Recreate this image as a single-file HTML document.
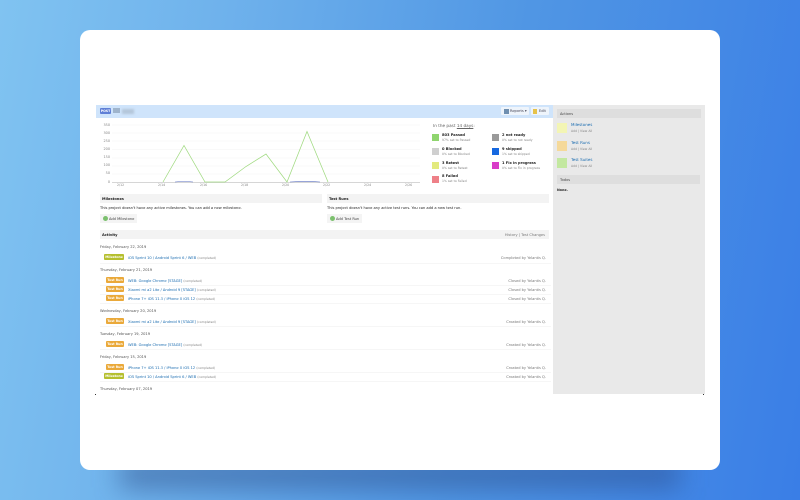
<!DOCTYPE html>
<html><head><meta charset="utf-8"><style>
html,body{margin:0;padding:0}
body{width:800px;height:500px;overflow:hidden;position:relative;background:linear-gradient(100deg,#80c3f1 0%,#6fb2ec 25%,#5096e4 60%,#3a7ee6 100%);font-family:"DejaVu Sans","Liberation Sans",sans-serif;text-rendering:geometricPrecision}
.shadow{position:absolute;left:120px;top:460px;width:560px;height:28px;background:rgba(40,70,130,.5);filter:blur(13px)}
.card{position:absolute;left:80px;top:30px;width:640px;height:440px;background:#fff;border-radius:10px}
.c{position:absolute;left:0;top:0;width:800px;height:500px;filter:blur(.35px)}
.c div{position:absolute;white-space:nowrap}
.t{font-size:3.6px;line-height:6px;height:6px;color:#444}
.b{font-weight:bold;color:#222}
.l{color:#1a6cb0}
.k{font-size:3.1px;color:#888}
.d{color:#555;left:100px}
.tag{left:106px;width:18px;height:6px;font-size:3.2px;line-height:6px;text-align:center;color:#fff;font-weight:bold;border-radius:1px;background:#eaa93a}
.tag.m{left:104px;width:20px;background:#b5bf2e}
.r{color:#777;text-align:right;right:254px}
.hd{background:#f3f3f3;height:9px}
.sw{width:7px;height:7px}
.y{font-size:3.4px;color:#888;text-align:right;width:14px;left:96px;line-height:6px;height:6px}
.x{font-size:3.2px;color:#888;line-height:6px;height:6px}
.sl{width:10px;height:10px}
.ln{left:100px;width:451px;height:1px;background:#f6f6f6}
.s{font-size:4px}
</style></head><body>
<div class="shadow"></div>
<div class="card"></div>
<div class="c">
<div style="left:96px;top:105px;width:457px;height:13px;background:#cfe4fb"></div>
<div style="left:100px;top:108px;width:11px;height:6px;background:#5f7fd6;border-radius:1px;font-size:3.2px;line-height:6px;color:#fff;text-align:center;font-weight:bold">POST</div>
<div style="left:113px;top:108px;width:7px;height:5px;background:#9fb4cc"></div>
<div style="left:122px;top:108.500px;width:12px;height:5px;background:#b4c6da;filter:blur(1px)"></div>
<div style="left:501px;top:107px;width:28px;height:8px;background:#eef4fb;border-radius:1px"></div>
<div style="left:504px;top:108.500px;width:5px;height:5px;background:#6f8fb0"></div>
<div class="t" style="left:510px;top:108px;color:#445">Reports ▾</div>
<div style="left:531px;top:107px;width:18px;height:8px;background:#eef4fb;border-radius:1px"></div>
<div style="left:533px;top:108.500px;width:4px;height:5px;background:#e6c24a"></div>
<div class="t" style="left:539px;top:108px;color:#445">Edit</div>

<div class="y" style="top:122px">350</div><div class="y" style="top:130px">300</div><div class="y" style="top:138px">250</div><div class="y" style="top:146px">200</div><div class="y" style="top:154px">150</div><div class="y" style="top:162px">100</div><div class="y" style="top:170px">50</div><div class="y" style="top:179px">0</div>
<svg style="position:absolute;left:0;top:0" width="800" height="500" viewBox="0 0 800 500">
<g stroke="#f3f3f3" stroke-width=".6"><path d="M112 125H420M112 133H420M112 141H420M112 149.500H420M112 158H420M112 166H420M112 174H420"/></g>
<path d="M112 182.500H420" stroke="#c8c8c8" stroke-width=".8"/>
<path d="M175 182Q184 181 193 182M290 182Q307 180.800 320 182" stroke="#5a6fc0" stroke-width=".6" fill="none"/>
<path d="M163 182L184 145.500L205 182H225L246 166.500L266 154L287 182L307 131.500L328 182" stroke="#a0da80" stroke-width=".75" fill="none"/>
</svg>
<div class="x" style="left:117px;top:182px">2/12</div><div class="x" style="left:158px;top:182px">2/14</div><div class="x" style="left:200px;top:182px">2/16</div><div class="x" style="left:241px;top:182px">2/18</div><div class="x" style="left:282px;top:182px">2/20</div><div class="x" style="left:323px;top:182px">2/22</div><div class="x" style="left:364px;top:182px">2/24</div><div class="x" style="left:405px;top:182px">2/26</div>

<div class="t" style="left:433px;top:123px;font-size:4.200px;color:#666">In the past <u>14 days</u>:</div>
<div class="sw" style="left:432px;top:134px;background:#8fd56e"></div>
<div class="t b" style="left:442px;top:132px">803 Passed</div><div class="t k" style="left:442px;top:137px">97% set to Passed</div>
<div class="sw" style="left:432px;top:148px;background:#cfcfcf"></div>
<div class="t b" style="left:442px;top:146px">0 Blocked</div><div class="t k" style="left:442px;top:151px">0% set to Blocked</div>
<div class="sw" style="left:432px;top:162px;background:#e3ea7e"></div>
<div class="t b" style="left:442px;top:160px">3 Retest</div><div class="t k" style="left:442px;top:165px">0% set to Retest</div>
<div class="sw" style="left:432px;top:176px;background:#ee8088"></div>
<div class="t b" style="left:442px;top:173px">8 Failed</div><div class="t k" style="left:442px;top:178px">1% set to Failed</div>
<div class="sw" style="left:492px;top:134px;background:#9a9a9a"></div>
<div class="t b" style="left:502px;top:132px">2 not ready</div><div class="t k" style="left:502px;top:137px">0% set to not ready</div>
<div class="sw" style="left:492px;top:148px;background:#1668e0"></div>
<div class="t b" style="left:502px;top:146px">9 skipped</div><div class="t k" style="left:502px;top:151px">1% set to skipped</div>
<div class="sw" style="left:492px;top:162px;background:#d93cc8"></div>
<div class="t b" style="left:502px;top:160px">1 Fix in progress</div><div class="t k" style="left:502px;top:165px">0% set to Fix in progress</div>

<div class="hd" style="left:100px;top:194px;width:222px"></div>
<div class="t b" style="left:102px;top:195.500px">Milestones</div>
<div class="t" style="left:100px;top:205px;color:#222">This project doesn't have any active milestones. You can add a new milestone.</div>
<div style="left:100px;top:214px;width:37px;height:9px;background:#f4f4f4"></div>
<div style="left:103px;top:216px;width:5px;height:5px;background:#7cc06e;border-radius:50%"></div>
<div class="t" style="left:109px;top:215.500px;color:#444">Add Milestone</div>

<div class="hd" style="left:327px;top:194px;width:222px"></div>
<div class="t b" style="left:329px;top:195.500px">Test Runs</div>
<div class="t" style="left:327px;top:205px;color:#222">This project doesn't have any active test runs. You can add a new test run.</div>
<div style="left:327px;top:214px;width:35px;height:9px;background:#f4f4f4"></div>
<div style="left:330px;top:216px;width:5px;height:5px;background:#7cc06e;border-radius:50%"></div>
<div class="t" style="left:336px;top:215.500px;color:#444">Add Test Run</div>

<div class="hd" style="left:100px;top:230px;width:449px"></div>
<div class="t b" style="left:102px;top:232px">Activity</div>
<div class="t" style="right:255px;top:232px;color:#777">History | Test Changes</div>

<div class="t d" style="top:243.500px">Friday, February 22, 2019</div>
<div class="tag m" style="top:254px">Milestone</div><div class="t" style="left:128px;top:254.500px"><span class="l">iOS Sprint 10 / Android Sprint 6 / WEB</span> <span class="k">(completed)</span></div><div class="t r" style="top:254.500px">Completed by Yelantis Q.</div>
<div class="ln" style="top:263px"></div>
<div class="t d" style="top:267px">Thursday, February 21, 2019</div>
<div class="tag" style="top:277px">Test Run</div><div class="t" style="left:128px;top:277.500px"><span class="l">WEB: Google Chrome [STAGE]</span> <span class="k">(completed)</span></div><div class="t r" style="top:277.500px">Closed by Yelantis Q.</div>
<div class="ln" style="top:285px"></div>
<div class="tag" style="top:286px">Test Run</div><div class="t" style="left:128px;top:286.500px"><span class="l">Xiaomi mi a2 Lite / Android 9 [STAGE]</span> <span class="k">(completed)</span></div><div class="t r" style="top:286.500px">Closed by Yelantis Q.</div>
<div class="ln" style="top:294px"></div>
<div class="tag" style="top:295px">Test Run</div><div class="t" style="left:128px;top:295.500px"><span class="l">iPhone 7+ iOS 11.3 / iPhone X iOS 12</span> <span class="k">(completed)</span></div><div class="t r" style="top:295.500px">Closed by Yelantis Q.</div>
<div class="ln" style="top:303px"></div>
<div class="t d" style="top:308px">Wednesday, February 20, 2019</div>
<div class="tag" style="top:318px">Test Run</div><div class="t" style="left:128px;top:318.500px"><span class="l">Xiaomi mi a2 Lite / Android 9 [STAGE]</span> <span class="k">(completed)</span></div><div class="t r" style="top:318.500px">Created by Yelantis Q.</div>
<div class="ln" style="top:326px"></div>
<div class="t d" style="top:331px">Tuesday, February 19, 2019</div>
<div class="tag" style="top:341px">Test Run</div><div class="t" style="left:128px;top:341.500px"><span class="l">WEB: Google Chrome [STAGE]</span> <span class="k">(completed)</span></div><div class="t r" style="top:341.500px">Created by Yelantis Q.</div>
<div class="ln" style="top:349px"></div>
<div class="t d" style="top:354px">Friday, February 15, 2019</div>
<div class="tag" style="top:364px">Test Run</div><div class="t" style="left:128px;top:364.500px"><span class="l">iPhone 7+ iOS 11.3 / iPhone X iOS 12</span> <span class="k">(completed)</span></div><div class="t r" style="top:364.500px">Created by Yelantis Q.</div>
<div class="ln" style="top:372px"></div>
<div class="tag m" style="top:373px">Milestone</div><div class="t" style="left:128px;top:373.500px"><span class="l">iOS Sprint 10 / Android Sprint 6 / WEB</span> <span class="k">(completed)</span></div><div class="t r" style="top:373.500px">Created by Yelantis Q.</div>
<div class="ln" style="top:381px"></div>
<div class="t d" style="top:386px">Thursday, February 07, 2019</div>
<div style="left:95px;top:394px;width:1px;height:1px;background:#333"></div>
<div style="left:703px;top:394px;width:1px;height:1px;background:#333"></div>

<div style="left:553px;top:105px;width:152px;height:289px;background:#e9e9e9"></div>
<div style="left:557px;top:109px;width:144px;height:9px;background:#dedede"></div>
<div class="t" style="left:560px;top:110.500px;color:#444">Actions</div>
<div class="sl" style="left:557px;top:123px;background:#f3f5b4"></div>
<div class="t l s" style="left:571px;top:122px">Milestones</div><div class="t k" style="left:571px;top:128px">Add | View All</div>
<div class="sl" style="left:557px;top:141px;background:#f5d99a"></div>
<div class="t l s" style="left:571px;top:140px">Test Runs</div><div class="t k" style="left:571px;top:146px">Add | View All</div>
<div class="sl" style="left:557px;top:158px;background:#c3e8a0"></div>
<div class="t l s" style="left:571px;top:157px">Test Suites</div><div class="t k" style="left:571px;top:163px">Add | View All</div>
<div style="left:557px;top:175px;width:143px;height:9px;background:#dedede"></div>
<div class="t" style="left:560px;top:177px;color:#444">Todos</div>
<div class="t" style="left:557px;top:187px;color:#222;font-weight:bold;font-size:3.300px">None.</div>
</div>
</body></html>
